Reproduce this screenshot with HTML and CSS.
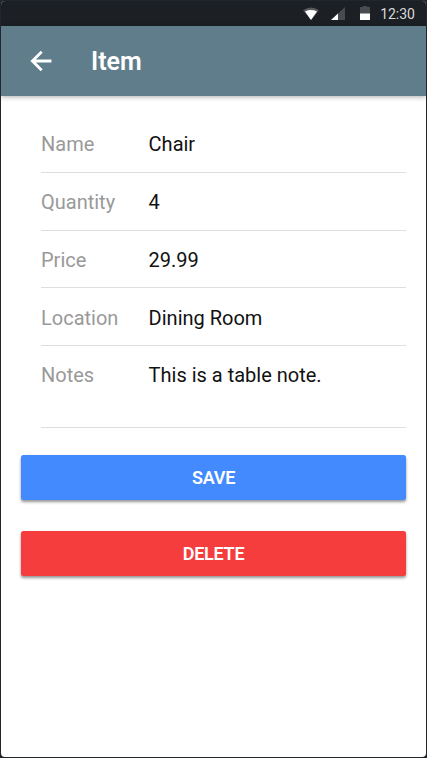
FILE: index.html
```html
<!DOCTYPE html>
<html lang="en">
<head>
<meta charset="utf-8">
<title>Item</title>
<link rel="stylesheet" href="styles.css">
</head>
<body>
<div class="screen">
  <div class="status">
    <svg class="status-icons" width="70" height="16" viewBox="0 0 70 16">
      <path d="M0 4.2Q8 -1.2 16 4.2L8 14Z" fill="#55585c"/>
      <path d="M2 5.4Q8 2.8 14 5.4L8 14Z" fill="#fff"/>
      <path d="M42 1V14H28Z" fill="#484b4f"/>
      <path d="M35 7.5V14H28Z" fill="#fff"/>
      <path d="M57 1H60V0H64V1H67V8H57Z" fill="#484b4f"/>
      <path d="M57 7.5H67V14H57Z" fill="#fff"/>
    </svg>
    <span class="clock">12:30</span>
  </div>
  <header class="toolbar">
    <svg class="back" width="22" height="22" viewBox="0 0 22 22" fill="none" stroke="#fff" stroke-width="2.8">
      <path d="M21.4 11H2.5M11.7 1.7L2.4 11L11.7 20.3"/>
    </svg>
    <h1 class="title">Item</h1>
  </header>
  <main class="content">
    <div class="fields">
      <div class="field"><label>Name</label><span>Chair</span></div>
      <div class="field"><label>Quantity</label><span>4</span></div>
      <div class="field"><label>Price</label><span>29.99</span></div>
      <div class="field"><label>Location</label><span>Dining Room</span></div>
      <div class="field notes"><label>Notes</label><span>This is a table note.</span></div>
    </div>
    <button class="btn save">SAVE</button>
    <button class="btn delete">DELETE</button>
  </main>
</div>
</body>
</html>
```
FILE: styles.css
```css
* { box-sizing: border-box; }
body {
  margin: 0;
  height: 758px;
  padding: 1px;
  background: #20262e;
  font-family: Roboto, sans-serif;
  overflow: hidden;
}
.screen {
  height: 756px;
  background: #fff;
  border-radius: 4px;
  overflow: hidden;
}
.status {
  height: 25px;
  background: #1c1f24;
  display: flex;
  align-items: center;
  justify-content: flex-end;
  gap: 7px;
  padding-right: 11px;
}
.status-icons { margin-top: 1px; }
.clock {
  color: #d8d9da;
  font-size: 14px;
  line-height: 24px;
}
.toolbar {
  height: 70px;
  background: #607d8b;
  display: flex;
  align-items: center;
  padding-left: 29px;
  box-shadow: 0 1px 5px rgba(0, 0, 0, .32);
}
.title {
  margin: 2px 0 0 39px;
  color: #fff;
  font-size: 25px;
  font-weight: 600;
  line-height: 30px;
}
.content {
  display: flex;
  flex-direction: column;
  padding: 19px 20px 0;
}
.fields { padding-left: 20px; }
.field {
  display: flex;
  height: 57.75px;
  padding-top: 17.3px;
  border-bottom: 1px solid #dedede;
  font-size: 20px;
  line-height: 24px;
  color: #111;
}
.field label { width: 107.6px; color: #999; }
.notes { height: 82px; padding-top: 17px; }
.btn {
  height: 45px;
  margin: 27px 0 0;
  padding: 0;
  border: 0;
  border-radius: 2.5px;
  color: #fff;
  font: 600 18px/45px Roboto, sans-serif;
  letter-spacing: -.25px;
  box-shadow: 0 2px 3px rgba(0, 0, 0, .42);
}
.save { background: #448aff; }
.delete { background: #f53d3d; margin-top: 31px; }
```
